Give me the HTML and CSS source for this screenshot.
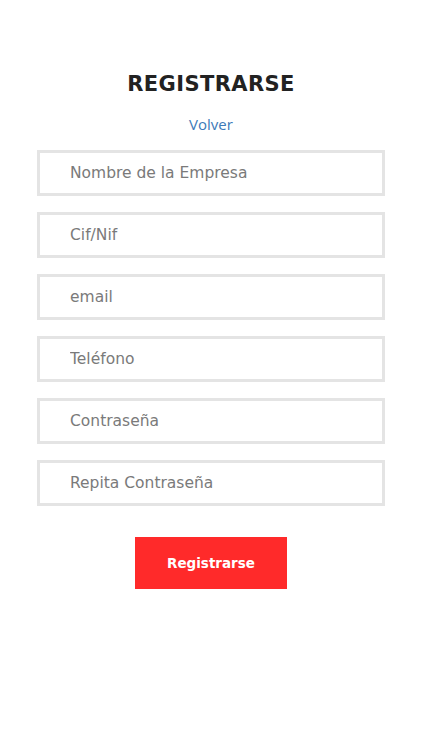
FILE: index.html
```html
<!DOCTYPE html>
<html>
<head>
    <meta charset="utf-8">
    <title>Registrarse</title>
    <link rel="stylesheet" href="styles.css">
</head>
<body>
    <div class="register">
        <h1>REGISTRARSE</h1>
        <a class="back" href="#">Volver</a>
        <form class="register-form">
            <input type="text" placeholder="Nombre de la Empresa">
            <input type="text" placeholder="Cif/Nif">
            <input type="email" placeholder="email">
            <input type="tel" placeholder="Teléfono">
            <input type="password" placeholder="Contraseña">
            <input type="password" placeholder="Repita Contraseña">
            <button type="submit">Registrarse</button>
        </form>
    </div>
</body>
</html>
```

FILE: styles.css
```css
body {
    font-family: "DejaVu Sans", sans-serif;
    background-color: #fff;
    margin: 0;
    padding: 0;
}

.register {
    display: flex;
    flex-direction: column;
    align-items: center;
    padding-top: 71px;
}

h1 {
    color: #222;
    font-size: 21px;
    font-weight: bold;
    letter-spacing: 0.4px;
    margin: 0;
    line-height: 26px;
}

.back {
    font-family: "Open Sans", sans-serif;
    color: #3d7ab8;
    font-size: 15px;
    text-decoration: none;
    margin-top: 17px;
    line-height: 20px;
}

.register-form {
    display: flex;
    flex-direction: column;
    align-items: center;
    gap: 16px;
    margin-top: 16px;
}

.register-form input {
    box-sizing: border-box;
    width: 348px;
    height: 46px;
    border: 3px solid #e4e4e4;
    padding: 0 0 0 30px;
    font-family: "DejaVu Sans", sans-serif;
    font-size: 15.5px;
    color: #555;
    outline: none;
}

.register-form input::placeholder {
    color: #7a7a7a;
}

.register-form button {
    margin-top: 15px;
    width: 152px;
    height: 52px;
    border: none;
    background-color: #ff2a2a;
    color: #fff;
    font-family: "DejaVu Sans", sans-serif;
    font-weight: bold;
    font-size: 13.5px;
}
```
